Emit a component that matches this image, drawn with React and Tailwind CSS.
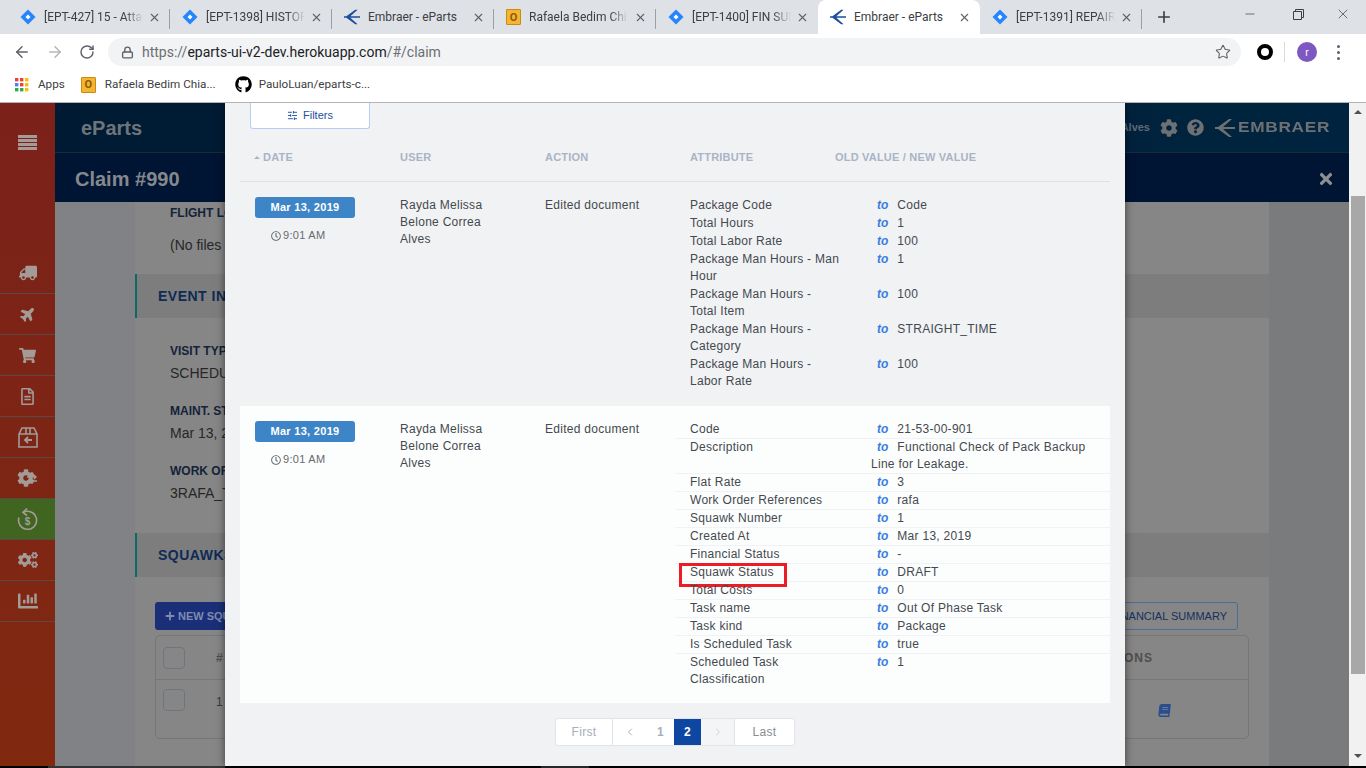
import { ArrowLeft, ArrowRight, RotateCw, Lock, Star, X, Plus, Minus, SlidersHorizontal, ChevronLeft, ChevronRight } from 'lucide-react';
import { FaTruck, FaPlane, FaShoppingCart, FaRegFileAlt, FaCogs, FaChartBar, FaCog, FaQuestionCircle, FaTimes, FaBook, FaGithub, FaPlus, FaRegClock } from 'react-icons/fa';

const font = { fontFamily: '"Liberation Sans", Arial, sans-serif' };

const JiraIcon = () => (
  <svg width="16" height="16" viewBox="0 0 16 16" className="shrink-0">
    <path d="M8 0.5 15.5 8 8 15.5 0.5 8Z" fill="#2684ff" />
    <path d="M8 5.5 10.5 8 8 10.5 5.5 8Z" fill="#fff" />
  </svg>
);

const EmbraerArrow = ({ color = '#1d4f9c', w = 16, h = 16 }) => (
  <svg width={w} height={h} viewBox="0 0 20 20" className="shrink-0">
    <path d="M14 1 L17 1 L8 9 L20 9 L20 11 L8 11 L17 19 L14 19 L3 11 L0 11 L0 9 L3 9Z" fill={color} />
  </svg>
);

const OutlookIcon = () => (
  <div className="w-[15px] h-[16px] shrink-0 bg-[#f5b52e] border border-[#c98a12] flex items-center justify-center text-[11px] leading-none font-bold text-[#8a5a10] rounded-[1px]">O</div>
);

const tabs = [
  { title: '[EPT-427] 15 - Attachments', icon: <JiraIcon />, fade: true },
  { title: '[EPT-1398] HISTORY', icon: <JiraIcon />, fade: true },
  { title: 'Embraer - eParts', icon: <EmbraerArrow /> },
  { title: 'Rafaela Bedim Chiarelli', icon: <OutlookIcon />, fade: true },
  { title: '[EPT-1400] FIN SUMMARY', icon: <JiraIcon />, fade: true },
  { title: 'Embraer - eParts', icon: <EmbraerArrow />, active: true },
  { title: '[EPT-1391] REPAIR', icon: <JiraIcon />, fade: true },
];

const Tab = ({ tab, noSep }) => (
  <div className={`w-[162px] h-[34px] flex items-center pl-[12px] pr-[9px] relative ${tab.active ? 'bg-white rounded-t-lg' : ''}`}>
    {tab.icon}
    <div className={`w-[99px] ml-[8px] overflow-hidden whitespace-nowrap text-[12px] text-[#3c4043] ${tab.fade ? '[mask-image:linear-gradient(to_right,black_82%,transparent)]' : ''}`} style={{ fontFamily: 'Roboto, sans-serif' }}>{tab.title}</div>
    <X size={13} strokeWidth={2} className="ml-auto text-[#5f6368]" />
    {!noSep && <div className="absolute right-0 top-[9px] h-[20px] w-px bg-[#9aa0a6]" />}
  </div>
);

const BrowserChrome = () => (
  <div className="shrink-0 relative z-10" style={{ fontFamily: 'Roboto, sans-serif' }}>
    <div className="h-[34px] bg-[#dee1e6] flex pl-[8px]">
      {tabs.map((t, i) => <Tab key={i} tab={t} noSep={i === 4 || i === 5} />)}
      <Plus size={18} strokeWidth={2.2} className="ml-[13px] mt-[8px] text-[#3c4043]" />
      <div className="ml-auto flex items-start text-[#3c4043]">
        <Minus size={14} strokeWidth={1.2} className="mt-[7px] mr-[36px]" />
        <svg width="11" height="11" viewBox="0 0 11 11" className="mt-[9px] mr-[31px]" fill="none" stroke="#3c4043"><path d="M0.5 2.5h8v8h-8zM2.5 2.5v-2h8v8h-2" /></svg>
        <X size={16} strokeWidth={1.1} className="mt-[6px] mr-[15px]" />
      </div>
    </div>
    <div className="h-[34px] pt-[2px] bg-white flex items-center">
      <ArrowLeft size={18} strokeWidth={2} className="ml-[13px] text-[#5f6368]" />
      <ArrowRight size={18} strokeWidth={2} className="ml-[15px] text-[#b4b6b9]" />
      <RotateCw size={16} strokeWidth={2.2} className="ml-[15px] text-[#5f6368]" />
      <div className="ml-[13px] w-[1133px] h-[28px] rounded-full bg-[#f1f3f4] flex items-center">
        <Lock size={13} strokeWidth={2.5} className="ml-[13px] text-[#5f6368]" />
        <span className="ml-[8px] text-[14px] text-[#202124]"><span className="text-[#6b6e72]">https://</span>eparts-ui-v2-dev.herokuapp.com<span className="text-[#6b6e72]">/#/claim</span></span>
        <Star size={16} strokeWidth={1.6} className="ml-auto mr-[10px] text-[#5f6368]" />
      </div>
      <div className="ml-[16px] w-[16px] h-[16px] rounded-full border-[4px] border-black" />
      <div className="ml-[11px] w-px h-[20px] bg-[#dadce0]" />
      <div className="ml-[12px] w-[20px] h-[20px] rounded-full bg-[#7e57c2] text-white text-[10px] flex items-center justify-center">r</div>
      <div className="ml-[20px] flex flex-col gap-[3px]">
        <div className="w-[3px] h-[3px] rounded-full bg-[#5f6368]" />
        <div className="w-[3px] h-[3px] rounded-full bg-[#5f6368]" />
        <div className="w-[3px] h-[3px] rounded-full bg-[#5f6368]" />
      </div>
    </div>
    <div className="h-[35px] pb-[1px] bg-white border-b border-[#b4b4b4] flex items-center text-[11.7px] text-[#3c4043]">
      <svg width="14" height="14" viewBox="0 0 14 14" className="ml-[15px]">
        {[['#ea4335', '#ea4335', '#fbbc05'], ['#4285f4', '#ea4335', '#fbbc05'], ['#34a853', '#34a853', '#fbbc05']].map((row, r) =>
          row.map((c, i) => <rect key={`${r}${i}`} x={i * 5} y={r * 5} width="3.4" height="3.4" fill={c} />)
        )}
      </svg>
      <span className="ml-[9px]">Apps</span>
      <div className="ml-[16px]"><OutlookIcon /></div>
      <span className="ml-[9px]">Rafaela Bedim Chia...</span>
      <FaGithub size={17} className="ml-[19px] text-black" />
      <span className="ml-[7px]">PauloLuan/eparts-c...</span>
    </div>
  </div>
);

const BoxBack = () => (
  <svg width="20" height="21" viewBox="0 0 20 21" fill="none" stroke="#a49b97" strokeWidth="1.6">
    <path d="M1 7 4 1h12l3 6v13H1zM1 7h18M8 1v6M12 1v6" />
    <path d="M14 13H7M10 10l-3 3 3 3" strokeWidth="1.8" />
  </svg>
);

const GearSwap = () => (
  <div className="relative w-[21px] h-[18px]">
    <FaCog size={18} className="text-[#a49b97]" />
    <svg width="12" height="10" viewBox="0 0 12 10" className="absolute right-0 top-[5px]" fill="none" stroke="#a49b97" strokeWidth="1.4">
      <path d="M1 3h9M8 1l2 2-2 2M11 7H2M4 5 2 7l2 2" />
    </svg>
  </div>
);

const DollarBack = () => (
  <svg width="21" height="23" viewBox="0 0 21 23" fill="none" stroke="#a49b97" strokeWidth="1.6">
    <path d="M6 4.5a9 9 0 1 1-4 5" />
    <path d="M10 0.5 6 4.5l4 3" />
    <text x="10.5" y="17" textAnchor="middle" fontSize="10" fontWeight="700" fill="#a49b97" stroke="none" fontFamily="Liberation Sans">$</text>
  </svg>
);

const navItems = [
  { icon: <FaTruck size={18} className="text-[#a49b97] -scale-x-100" /> },
  { icon: <FaPlane size={16} className="text-[#a49b97] -rotate-45" /> },
  { icon: <FaShoppingCart size={17} className="text-[#a49b97]" /> },
  { icon: <FaRegFileAlt size={17} className="text-[#a49b97]" /> },
  { icon: <BoxBack /> },
  { icon: <GearSwap /> },
  { icon: <DollarBack />, active: true },
  { icon: <FaCogs size={20} className="text-[#a49b97]" /> },
  { icon: <FaChartBar size={20} className="text-[#a49b97]" /> },
];

const Sidebar = () => (
  <div className="w-[55px] shrink-0 bg-gradient-to-b from-[#7b211a] to-[#80290f] flex flex-col">
    <div className="h-[150px] shrink-0 flex flex-col items-center gap-[1px] pt-[32px]">
      <div className="w-[19px] h-[3px] bg-[#a49b97]" />
      <div className="w-[19px] h-[3px] bg-[#a49b97]" />
      <div className="w-[19px] h-[3px] bg-[#a49b97]" />
      <div className="w-[19px] h-[3px] bg-[#a49b97]" />
    </div>
    {navItems.map((item, i) => (
      <div key={i} className={`h-[41px] shrink-0 flex items-center justify-center border-b border-[#5b4a44] ${item.active ? 'bg-[#3f6521]' : ''}`}>
        {item.icon}
      </div>
    ))}
  </div>
);

const Field = ({ label, value }) => (
  <div className="mb-[21px]">
    <div className="text-[12px] leading-[17px] font-bold text-[#14233a] whitespace-nowrap">{label}</div>
    <div className="mt-[5px] text-[14px] leading-[17px] text-[#262626] whitespace-nowrap">{value}</div>
  </div>
);

const SectionBar = ({ children }) => (
  <div className="h-[44px] bg-[#7d7d7d] border-l-2 border-[#0b6a63] flex items-center pl-[21px] text-[14px] font-bold tracking-[0.5px] text-[#0f2a55] whitespace-nowrap">{children}</div>
);

const Checkbox = ({ className }) => <div className={`w-[22px] h-[22px] shrink-0 rounded-[4px] border border-[#6d7680] ${className}`} />;

const Background = () => (
  <div className="flex-1 flex flex-col min-w-0 overflow-hidden">
    <div className="h-[50px] shrink-0 bg-gradient-to-r from-[#001a33] to-[#00243f] border-b border-[#1c2a38] flex items-center pl-[26px] pr-[20px]">
      <span className="text-[20px] font-bold text-[#6e757a]">eParts</span>
      <div className="ml-auto flex items-center">
        <span className="text-[11px] font-bold text-[#5f6a74]">Rayda Melissa Belone Correa Alves</span>
        <FaCog size={18} className="ml-[10px] text-[#6d7173]" />
        <FaQuestionCircle size={17} className="ml-[9px] text-[#6d7173]" />
        <div className="ml-[11px]"><EmbraerArrow color="#6d7173" w={20} h={20} /></div>
        <span className="ml-[3px] text-[15px] font-black tracking-[0.6px] text-[#6d7173] origin-left scale-x-[1.15] w-[91px]">EMBRAER</span>
      </div>
    </div>
    <div className="h-[49px] pt-[2px] shrink-0 bg-[#001433] flex items-center pl-[20px] pr-[14px]">
      <span className="text-[20px] font-bold text-[#85898e]">Claim #990</span>
      <FaTimes size={18} className="ml-auto text-[#8c8f93]" />
    </div>
    <div className="flex-1 flex min-h-0">
      <div className="w-[80px] shrink-0 bg-[#808285]" />
      <div className="flex-1 min-w-0 bg-[#868686] pt-[3px]">
        <div className="pl-[35px]">
          <div className="text-[12px] leading-[17px] font-bold text-[#14233a]">FLIGHT LOGS</div>
          <div className="mt-[15px] text-[14px] leading-[17px] text-[#262626]">(No files selected)</div>
        </div>
        <div className="mt-[20px]"><SectionBar>EVENT INFORMATION</SectionBar></div>
        <div className="pl-[35px] pt-[25px]">
          <Field label="VISIT TYPE" value="SCHEDULED" />
          <Field label="MAINT. START" value="Mar 13, 2019" />
          <Field label="WORK ORDER" value="3RAFA_TEST" />
        </div>
        <div className="mt-[31px]"><SectionBar>SQUAWKS</SectionBar></div>
        <div className="mt-[25px] ml-[20px] mr-[31px] flex justify-between">
          <div className="h-[28px] bg-[#1a2f78] rounded-[3px] flex items-center px-[10px] gap-[3px] text-[11px] font-bold text-[#7f8bb0]">
            <FaPlus size={10} /> NEW SQUAWK
          </div>
          <div className="h-[28px] border border-[#4c6d99] rounded-[3px] flex items-center px-[10px] text-[11px] text-[#14305f]">FINANCIAL SUMMARY</div>
        </div>
        <div className="mt-[5px] mx-[20px] h-[104px] border border-[#767676] rounded-[5px]">
          <div className="h-[44px] border-b border-[#767676] flex items-center pl-[7px] pr-[95px]">
            <Checkbox />
            <span className="ml-[31px] text-[12px] font-bold text-[#4e4e4e]">#</span>
            <span className="ml-auto text-[12px] font-bold tracking-[1px] text-[#4e4e4e]">ACTIONS</span>
          </div>
          <div className="flex items-start pl-[7px] pr-[77px] text-[12px] text-[#3a3a3a]">
            <Checkbox className="mt-[9px]" />
            <span className="ml-[31px] mt-[13px]">1</span>
            <span className="ml-auto mt-[20px]">-</span>
            <FaBook size={13} className="ml-[35px] mt-[24px] text-[#2a4f8f] -skew-x-6" />
          </div>
        </div>
      </div>
      <div className="w-[80px] shrink-0 bg-[#7a7b7d]" />
    </div>
  </div>
);

const Scrollbar = () => (
  <div className="w-[17px] shrink-0 bg-[#f1f1f1] flex flex-col items-center pl-[1px]">
    <div className="mt-[7px] w-0 h-0 border-x-[4px] border-x-transparent border-b-[4px] border-b-[#505050]" />
    <div className="mt-[82px] w-[14px] h-[478px] bg-[#a8a8a8]" />
    <div className="mt-[80px] w-0 h-0 border-x-[4px] border-x-transparent border-t-[4px] border-t-[#505050]" />
  </div>
);

const firstRows = [
  ['Package Code', 'Code'],
  ['Total Hours', '1'],
  ['Total Labor Rate', '100'],
  ['Package Man Hours - Man Hour', '1'],
  ['Package Man Hours - Total Item', '100'],
  ['Package Man Hours - Category', 'STRAIGHT_TIME'],
  ['Package Man Hours - Labor Rate', '100'],
];

const secondRows = [
  ['Code', '21-53-00-901'],
  ['Description', 'Functional Check of Pack Backup Line for Leakage.'],
  ['Flat Rate', '3'],
  ['Work Order References', 'rafa'],
  ['Squawk Number', '1'],
  ['Created At', 'Mar 13, 2019'],
  ['Financial Status', '-'],
  ['Squawk Status', 'DRAFT', true],
  ['Total Costs', '0'],
  ['Task name', 'Out Of Phase Task'],
  ['Task kind', 'Package'],
  ['Is Scheduled Task', 'true'],
  ['Scheduled Task Classification', '1'],
];

const AttrRow = ({ attr, value, mark, last }) => (
  <div className={`flex relative text-[12px] leading-[17px] tracking-[0.28px] text-[#44494f] ${last ? '' : 'border-b border-[#f0f2f5]'}`}>
    <div className="w-[196px] shrink-0 pl-[15px] pr-[31px]">{attr}</div>
    <div className="flex-1 pr-[20px]">
      <span className="pl-[6px] pr-[9px] font-bold italic text-[#3a7de0] tracking-normal">to</span>{value}
    </div>
    {mark && <div className="absolute left-[4px] -top-[1px] w-[108px] h-[24px] border-[3px] border-[#ed1c24]" />}
  </div>
);

const HistoryRow = ({ rows, white }) => (
  <div className={`flex pt-[15px] ${white ? 'pb-[15px] bg-[#fcfdfd]' : 'pb-[16px]'}`}>
    <div className="w-[160px] shrink-0 pl-[15px]">
      <div className="w-[100px] h-[21px] rounded-[3px] bg-[#3d85c6] flex items-center justify-center text-[11px] font-bold tracking-[0.3px] text-white">Mar 13, 2019</div>
      <div className="mt-[9px] pl-[16px] flex items-center gap-[2px] text-[11px] leading-[17px] tracking-[0.3px] text-[#666b70]">
        <FaRegClock size={10} /> 9:01 AM
      </div>
    </div>
    <div className="w-[145px] shrink-0 pr-[40px] text-[12px] leading-[17px] tracking-[0.28px] text-[#44494f]">Rayda Melissa Belone Correa Alves</div>
    <div className="w-[130px] shrink-0 text-[12px] leading-[17px] tracking-[0.28px] text-[#44494f]">Edited document</div>
    <div className="flex-1 min-w-0">
      {rows.map((r, i) => <AttrRow key={i} attr={r[0]} value={r[1]} mark={r[2]} last={i === rows.length - 1} />)}
    </div>
  </div>
);

const Pagination = () => (
  <div className="mt-[15px] flex justify-center">
    <div className="flex h-[28px] bg-white border border-[#e2e4e7] rounded-[3px] text-[12px] tracking-[0.3px] overflow-hidden">
      <div className="w-[57px] flex items-center justify-center text-[#a3afbb] border-r border-[#e2e4e7]">First</div>
      <div className="w-[34px] flex items-center justify-center text-[#a3afbb]"><ChevronLeft size={12} /></div>
      <div className="w-[27px] flex items-center justify-center text-[#a3afbb] font-bold">1</div>
      <div className="w-[27px] flex items-center justify-center bg-[#0e47a1] text-white font-bold">2</div>
      <div className="w-[34px] flex items-center justify-center bg-[#f4f5f7] text-[#ccd2d8] border-r border-[#e2e4e7]"><ChevronRight size={12} /></div>
      <div className="w-[59px] flex items-center justify-center text-[#8a8d90]">Last</div>
    </div>
  </div>
);

const HistoryModal = () => (
  <div className="absolute left-[225px] top-[103px] w-[900px] h-[663px] bg-[#f1f2f4] shadow-[0_0_8px_rgba(0,0,0,0.55)] px-[15px]">
    <div className="ml-[10px] w-[120px] h-[26px] bg-white border border-t-0 border-[#b5cef5] rounded-b-[3px] flex items-center justify-center gap-[5px] text-[11px] text-[#1e4ea1]">
      <SlidersHorizontal size={11} strokeWidth={2} /> Filters
    </div>
    <div className="h-[53px] pt-[4px] border-b border-[#dfe1e5] flex items-center text-[11px] font-bold tracking-[0.2px] text-[#a9b4c6]">
      <div className="w-[160px] pl-[14px] flex items-center gap-[3px]">
        <div className="w-0 h-0 border-x-[3px] border-x-transparent border-b-[3px] border-b-[#a9b4c6]" /> DATE
      </div>
      <div className="w-[145px]">USER</div>
      <div className="w-[145px]">ACTION</div>
      <div className="w-[145px]">ATTRIBUTE</div>
      <div>OLD VALUE / NEW VALUE</div>
    </div>
    <HistoryRow rows={firstRows} />
    <HistoryRow rows={secondRows} white />
    <Pagination />
  </div>
);

export default function App() {
  return (
    <div className="relative w-[1366px] h-[768px] overflow-hidden flex flex-col bg-white" style={font}>
      <BrowserChrome />
      <div className="flex flex-1 min-h-0">
        <Sidebar />
        <Background />
        <Scrollbar />
      </div>
      <div className="h-[2px] shrink-0 bg-black flex">
        <div className="ml-[48px] w-[177px] bg-[#333333]" />
        <div className="ml-[316px] w-[48px] bg-[#333333]" />
      </div>
      <HistoryModal />
    </div>
  );
}
